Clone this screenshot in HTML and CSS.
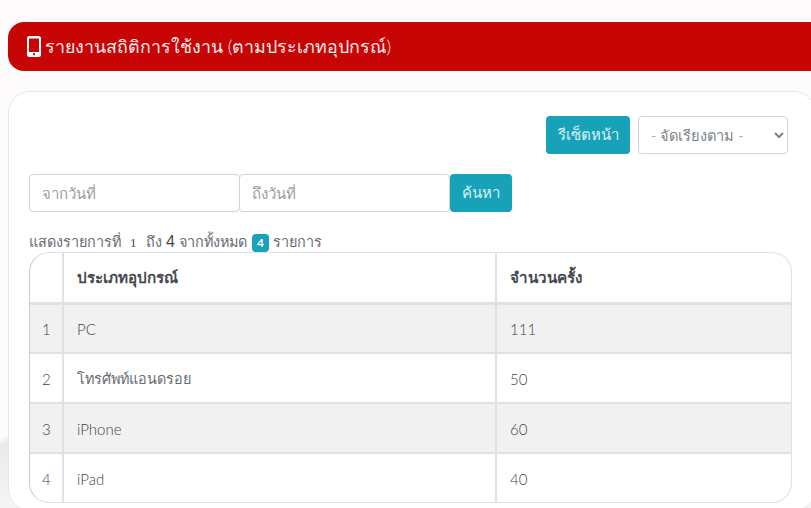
FILE: index.html
```html
<!DOCTYPE html>
<html lang="th">
<head>
<meta charset="utf-8">
<title>รายงานสถิติการใช้งาน</title>
<link rel="stylesheet" href="styles.css">
</head>
<body>
<div class="page">
  <h1 class="banner">
    <svg class="phone" viewBox="0 0 14 21" width="14" height="21" aria-hidden="true">
      <rect x="0" y="0" width="14" height="21" rx="2.5" fill="#fff"/>
      <rect x="2" y="2.5" width="10" height="13.5" fill="#c80505"/>
      <rect x="6" y="17.2" width="2" height="2" fill="#c80505"/>
    </svg>
    <span>รายงานสถิติการใช้งาน (ตามประเภทอุปกรณ์)</span>
  </h1>
  <section class="card">
    <div class="toolbar">
      <button class="btn">รีเซ็ตหน้า</button>
      <select class="sort"><option>- จัดเรียงตาม -</option></select>
    </div>
    <form class="search">
      <input class="field" placeholder="จากวันที่">
      <input class="field" placeholder="ถึงวันที่">
      <button class="btn btn-search" type="button">ค้นหา</button>
    </form>
    <p class="summary">แสดงรายการที่ &nbsp;<span class="first">1</span>&nbsp; ถึง <b class="num">4</b> จากทั้งหมด <span class="badge">4</span> รายการ</p>
    <div class="table-wrap">
      <table class="table">
        <thead>
          <tr><th class="c1"></th><th class="c2">ประเภทอุปกรณ์</th><th class="c3">จำนวนครั้ง</th></tr>
        </thead>
        <tbody>
          <tr><td class="idx">1</td><td>PC</td><td>111</td></tr>
          <tr><td class="idx">2</td><td class="thai">โทรศัพท์แอนดรอย</td><td>50</td></tr>
          <tr><td class="idx">3</td><td>iPhone</td><td>60</td></tr>
          <tr><td class="idx">4</td><td>iPad</td><td>40</td></tr>
        </tbody>
      </table>
    </div>
  </section>
</div>
</body>
</html>
```
FILE: styles.css
```css
* { box-sizing: border-box; }
html, body { height: 100%; }
body {
  margin: 0;
  height: 508px;
  overflow: hidden;
  background: linear-gradient(160deg, #fdfbfb 0 54.5%, #e9e9e9 55.5%, #f5f5f5 63%);
  font-family: "Lato", "Noto Sans", sans-serif;
  font-size: 15px;
  font-weight: 300;
  color: #3f454b;
}
.page { padding: 22px 0 0 8px; }
.banner {
  margin: 0;
  height: 49px;
  padding: 0 0 0 19px;
  display: flex;
  align-items: center;
  gap: 4px;
  background: #c80505;
  color: #fdeeee;
  font-size: 17.8px;
  font-weight: 300;
  border-radius: 16px 0 0 16px;
}
.phone { flex: none; }
.card {
  margin: 20px -5px 0 0;
  height: 420px;
  padding: 24px 24px 0 20px;
  background: #fff;
  border: 1px solid #e6e6e6;
  border-radius: 22px;
}
.toolbar { display: flex; justify-content: flex-end; gap: 8px; padding-right: 3px; }
.btn {
  height: 38px;
  width: 84px;
  border: 0;
  padding: 0;
  border-radius: 4px;
  background: #17a2b8;
  color: #d9f1f5;
  font: inherit;
}
.sort {
  width: 150px;
  height: 38px;
  padding: 0 0 0 8px;
  border: 1px solid #ced4da;
  border-radius: 4px;
  background: #fff;
  color: #7b8289;
  font: inherit;
  font-size: 14.6px;
}
.search { display: flex; margin-top: 20px; }
.field {
  width: 211px;
  height: 38px;
  padding: 0 12px;
  border: 1px solid #ced4da;
  border-radius: 4px;
  font: inherit;
  margin-right: -1px;
}
.field::placeholder { color: #9aa0a6; opacity: 1; }
.btn-search { width: 62px; margin-left: 0.5px; }
.summary { margin: 19px 0 0; height: 21px; line-height: 21px; white-space: nowrap; font-size: 14.4px; word-spacing: 0.6px; color: #666c73; }
.first { font-family: "Liberation Serif", serif; font-size: 13px; font-weight: 400; color: #444a50; }
.num { font-family: "Liberation Sans", sans-serif; font-weight: 400; font-size: 16px; color: #444a50; }
.badge {
  display: inline-block;
  min-width: 17px;
  height: 18px;
  line-height: 18px;
  text-align: center;
  background: #17a2b8;
  color: #fff;
  font-size: 12px;
  font-weight: 700;
  border-radius: 4px;
}
.table-wrap {
  width: 763px;
  height: 251px;
  border: 1px solid #dee2e6;
  border-left-color: #c9ccd0;
  border-radius: 20px;
  overflow: hidden;
}
.table { width: 100%; height: 100%; border-collapse: collapse; table-layout: fixed; }
.c1 { width: 33px; }
.c2 { width: 433px; }
.table th, .table td { padding: 1px 0 0 13px; text-align: left; border-left: 2px solid #dee2e6; border-top: 2px solid #dee2e6; }
.table th { height: 50px; border-top: 0; border-bottom: 3px solid #dee2e6; font-size: 15.2px; font-weight: 700; color: #444a50; }
.table td { height: 50px; }
.table td.thai { font-size: 14.4px; color: #666c73; }
.table tr > :first-child { border-left: 0; }
.table td.idx { padding: 1px 0 0 12px; }
.table tbody tr:nth-child(odd) { background: #f1f1f1; }
```
